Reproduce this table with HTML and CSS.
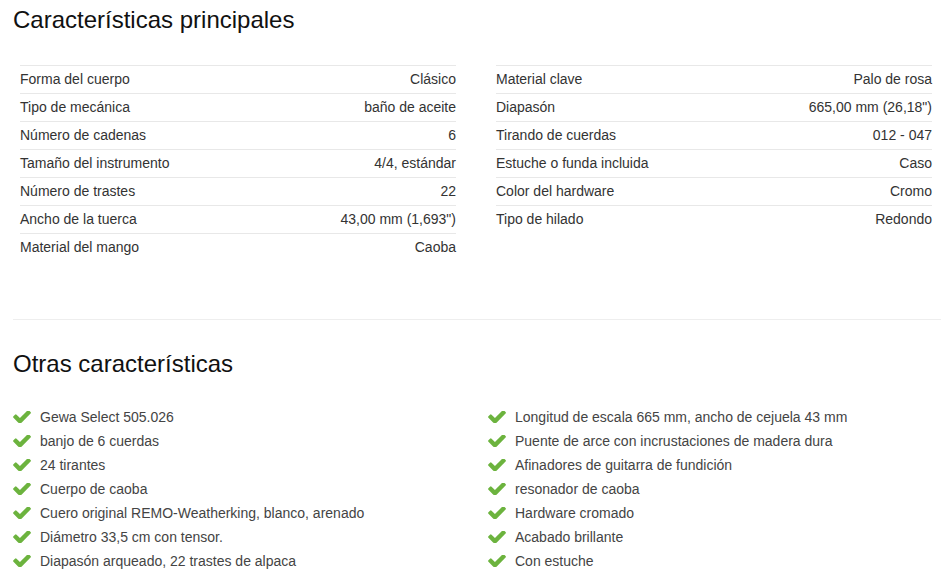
FILE: index.html
```html
<!DOCTYPE html>
<html lang="es">
<head>
<meta charset="utf-8">
<title>Características</title>
<link rel="stylesheet" href="styles.css">
</head>
<body>
<section class="block">
  <h2 class="title">Características principales</h2>
  <div class="specs">
    <div class="spec-table">
      <div class="row"><span>Forma del cuerpo</span><span>Clásico</span></div>
      <div class="row"><span>Tipo de mecánica</span><span>baño de aceite</span></div>
      <div class="row"><span>Número de cadenas</span><span>6</span></div>
      <div class="row"><span>Tamaño del instrumento</span><span>4/4, estándar</span></div>
      <div class="row"><span>Número de trastes</span><span>22</span></div>
      <div class="row"><span>Ancho de la tuerca</span><span>43,00 mm (1,693")</span></div>
      <div class="row"><span>Material del mango</span><span>Caoba</span></div>
    </div>
    <div class="spec-table">
      <div class="row"><span>Material clave</span><span>Palo de rosa</span></div>
      <div class="row"><span>Diapasón</span><span>665,00 mm (26,18")</span></div>
      <div class="row"><span>Tirando de cuerdas</span><span>012 - 047</span></div>
      <div class="row"><span>Estuche o funda incluida</span><span>Caso</span></div>
      <div class="row"><span>Color del hardware</span><span>Cromo</span></div>
      <div class="row"><span>Tipo de hilado</span><span>Redondo</span></div>
    </div>
  </div>
</section>
<hr class="sep">
<section class="block">
  <h2 class="title title-2">Otras características</h2>
  <div class="features">
    <ul class="list">
      <li><svg class="check" viewBox="110 420 1570 1020"><path d="M1671 566q0 40-28 68l-724 724-136 136q-28 28-68 28t-68-28l-136-136-362-362q-28-28-28-68t28-68l136-136q28-28 68-28t68 28l294 295 656-657q28-28 68-28t68 28l136 136q28 28 28 68z"/></svg>Gewa Select 505.026</li>
      <li><svg class="check" viewBox="110 420 1570 1020"><path d="M1671 566q0 40-28 68l-724 724-136 136q-28 28-68 28t-68-28l-136-136-362-362q-28-28-28-68t28-68l136-136q28-28 68-28t68 28l294 295 656-657q28-28 68-28t68 28l136 136q28 28 28 68z"/></svg>banjo de 6 cuerdas</li>
      <li><svg class="check" viewBox="110 420 1570 1020"><path d="M1671 566q0 40-28 68l-724 724-136 136q-28 28-68 28t-68-28l-136-136-362-362q-28-28-28-68t28-68l136-136q28-28 68-28t68 28l294 295 656-657q28-28 68-28t68 28l136 136q28 28 28 68z"/></svg>24 tirantes</li>
      <li><svg class="check" viewBox="110 420 1570 1020"><path d="M1671 566q0 40-28 68l-724 724-136 136q-28 28-68 28t-68-28l-136-136-362-362q-28-28-28-68t28-68l136-136q28-28 68-28t68 28l294 295 656-657q28-28 68-28t68 28l136 136q28 28 28 68z"/></svg>Cuerpo de caoba</li>
      <li><svg class="check" viewBox="110 420 1570 1020"><path d="M1671 566q0 40-28 68l-724 724-136 136q-28 28-68 28t-68-28l-136-136-362-362q-28-28-28-68t28-68l136-136q28-28 68-28t68 28l294 295 656-657q28-28 68-28t68 28l136 136q28 28 28 68z"/></svg>Cuero original REMO-Weatherking, blanco, arenado</li>
      <li><svg class="check" viewBox="110 420 1570 1020"><path d="M1671 566q0 40-28 68l-724 724-136 136q-28 28-68 28t-68-28l-136-136-362-362q-28-28-28-68t28-68l136-136q28-28 68-28t68 28l294 295 656-657q28-28 68-28t68 28l136 136q28 28 28 68z"/></svg>Diámetro 33,5 cm con tensor.</li>
      <li><svg class="check" viewBox="110 420 1570 1020"><path d="M1671 566q0 40-28 68l-724 724-136 136q-28 28-68 28t-68-28l-136-136-362-362q-28-28-28-68t28-68l136-136q28-28 68-28t68 28l294 295 656-657q28-28 68-28t68 28l136 136q28 28 28 68z"/></svg>Diapasón arqueado, 22 trastes de alpaca</li>
    </ul>
    <ul class="list">
      <li><svg class="check" viewBox="110 420 1570 1020"><path d="M1671 566q0 40-28 68l-724 724-136 136q-28 28-68 28t-68-28l-136-136-362-362q-28-28-28-68t28-68l136-136q28-28 68-28t68 28l294 295 656-657q28-28 68-28t68 28l136 136q28 28 28 68z"/></svg>Longitud de escala 665 mm, ancho de cejuela 43 mm</li>
      <li><svg class="check" viewBox="110 420 1570 1020"><path d="M1671 566q0 40-28 68l-724 724-136 136q-28 28-68 28t-68-28l-136-136-362-362q-28-28-28-68t28-68l136-136q28-28 68-28t68 28l294 295 656-657q28-28 68-28t68 28l136 136q28 28 28 68z"/></svg>Puente de arce con incrustaciones de madera dura</li>
      <li><svg class="check" viewBox="110 420 1570 1020"><path d="M1671 566q0 40-28 68l-724 724-136 136q-28 28-68 28t-68-28l-136-136-362-362q-28-28-28-68t28-68l136-136q28-28 68-28t68 28l294 295 656-657q28-28 68-28t68 28l136 136q28 28 28 68z"/></svg>Afinadores de guitarra de fundición</li>
      <li><svg class="check" viewBox="110 420 1570 1020"><path d="M1671 566q0 40-28 68l-724 724-136 136q-28 28-68 28t-68-28l-136-136-362-362q-28-28-28-68t28-68l136-136q28-28 68-28t68 28l294 295 656-657q28-28 68-28t68 28l136 136q28 28 28 68z"/></svg>resonador de caoba</li>
      <li><svg class="check" viewBox="110 420 1570 1020"><path d="M1671 566q0 40-28 68l-724 724-136 136q-28 28-68 28t-68-28l-136-136-362-362q-28-28-28-68t28-68l136-136q28-28 68-28t68 28l294 295 656-657q28-28 68-28t68 28l136 136q28 28 28 68z"/></svg>Hardware cromado</li>
      <li><svg class="check" viewBox="110 420 1570 1020"><path d="M1671 566q0 40-28 68l-724 724-136 136q-28 28-68 28t-68-28l-136-136-362-362q-28-28-28-68t28-68l136-136q28-28 68-28t68 28l294 295 656-657q28-28 68-28t68 28l136 136q28 28 28 68z"/></svg>Acabado brillante</li>
      <li><svg class="check" viewBox="110 420 1570 1020"><path d="M1671 566q0 40-28 68l-724 724-136 136q-28 28-68 28t-68-28l-136-136-362-362q-28-28-28-68t28-68l136-136q28-28 68-28t68 28l294 295 656-657q28-28 68-28t68 28l136 136q28 28 28 68z"/></svg>Con estuche</li>
    </ul>
  </div>
</section>
</body>
</html>
```

FILE: styles.css
```css
html, body {
  margin: 0;
  padding: 0;
  background: #fff;
}
body {
  font-family: "Liberation Sans", Arial, sans-serif;
  font-size: 14px;
  color: #333;
  padding: 0 7px 0 13px;
}
.title {
  margin: 0;
  padding-top: 6px;
  font-size: 24px;
  line-height: 27px;
  font-weight: normal;
  color: #111;
}
.specs {
  display: grid;
  grid-template-columns: 436px 436px;
  column-gap: 40px;
  margin: 32px 0 0 7px;
  align-items: start;
}
.row {
  display: flex;
  justify-content: space-between;
  border-top: 1px solid #e8e8e8;
  padding: 3px 0 4px;
  line-height: 20px;
  color: #333;
}
.sep {
  border: 0;
  border-top: 1px solid #eeeeee;
  margin: 58px 0 0 0;
  height: 0;
}
.title-2 {
  padding-top: 30px;
}
.features {
  display: grid;
  grid-template-columns: 475px 455px;
  margin-top: 28px;
}
.list {
  list-style: none;
  margin: 0;
  padding: 0;
}
.list li {
  display: flex;
  align-items: center;
  line-height: 24px;
  color: #444;
}
.check {
  width: 18px;
  height: 12px;
  margin-right: 9px;
  fill: #6cb33e;
  flex: none;
}
```
